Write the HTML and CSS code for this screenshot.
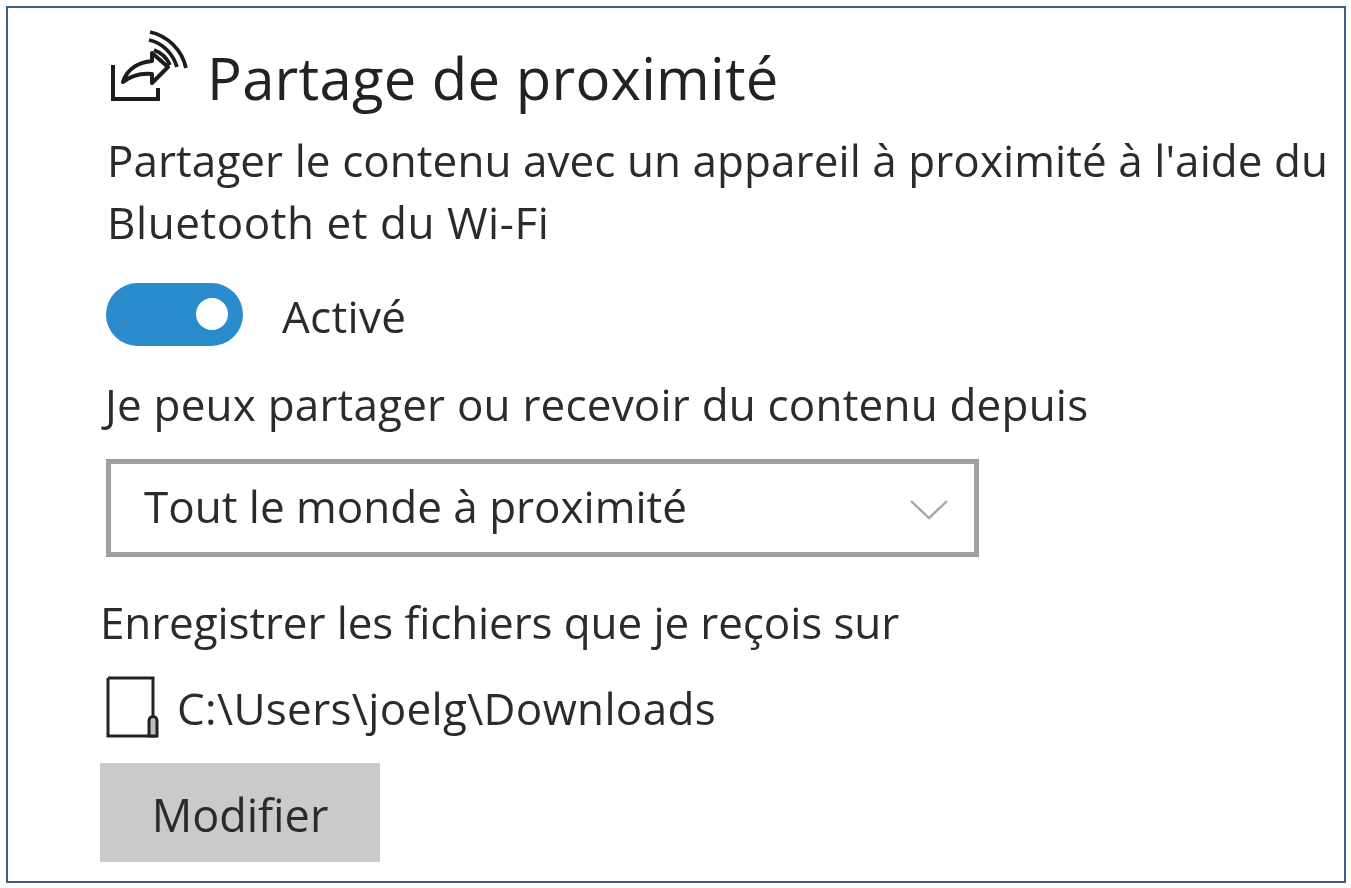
FILE: index.html
```html
<!DOCTYPE html>
<html lang="fr">
<head>
<meta charset="utf-8">
<title>Partage de proximité</title>
<link rel="stylesheet" href="styles.css">
</head>
<body>
<main class="frame">
  <header class="title-row">
    <svg class="share-icon" viewBox="0 0 80 80" width="80" height="80" fill="none" stroke="#1c1c1c" aria-hidden="true">
      <path d="M3 37V71H48V60" stroke-width="4"/>
      <path d="M13 54C17 40 30 34 42 33V25L58 39L42 55V46C32 45 22 47 13 54Z" stroke-width="4" stroke-linejoin="round"/>
      <path d="M40 4C58 8 72 22 76 40" stroke-width="3.8"/>
      <path d="M39 12C53 15 63 26 67 39" stroke-width="3.8"/>
      <path d="M44 22C52 25 57 30 60 37" stroke-width="3.8"/>
    </svg>
    <h1 class="title">Partage de proximité</h1>
  </header>
  <p class="desc">Partager le contenu avec un appareil à proximité à l'aide du<br><span class="desc-second">Bluetooth et du Wi-Fi</span></p>
  <div class="toggle-row">
    <span class="toggle"><span class="knob"></span></span>
    <span class="toggle-label">Activé</span>
  </div>
  <p class="label-from">Je peux partager ou recevoir du contenu depuis</p>
  <div class="select">
    <span class="select-text">Tout le monde à proximité</span>
    <svg class="chevron" viewBox="0 0 38 20" width="38" height="20" fill="none" stroke="#a6a6a6" stroke-width="2.4" aria-hidden="true">
      <path d="M1 1L19 18L37 1"/>
    </svg>
  </div>
  <p class="label-save">Enregistrer les fichiers que je reçois sur</p>
  <div class="path-row">
    <svg class="drive-icon" viewBox="0 0 54 64" width="54" height="64" fill="none" stroke="#222" stroke-width="3" aria-hidden="true">
      <path d="M2 2H47V40M2 2V60H50"/>
      <path d="M43 60V45C43 39 51 39 51 45V60Z" fill="#bbb"/>
    </svg>
    <span class="path-text">C:\Users\joelg\Downloads</span>
  </div>
  <button class="modify" type="button">Modifier</button>
</main>
</body>
</html>
```
FILE: styles.css
```css
* { box-sizing: border-box; }
html, body { margin: 0; padding: 0; background: #fff; }
body { width: 1351px; height: 888px; padding: 6px 5px 5px 6px; font-family: "Open Sans", "Noto Sans", sans-serif; color: #2b2b2b; overflow: hidden; }
.frame { width: 1340px; height: 877px; border: 2px solid #3f5a85; padding: 0 0 0 92px; display: flex; flex-direction: column; align-items: flex-start; }
.frame > * { filter: blur(0.7px); }
p, h1 { margin: 0; font-weight: 400; }
.title-row { display: flex; align-items: flex-start; margin: 20px 0 0 10px; height: 90px; }
.share-icon { display: block; }
.title { font-size: 58px; line-height: 70px; margin: 15px 0 0 17px; letter-spacing: 0.25px; color: #222; white-space: nowrap; }
.desc { font-size: 44px; line-height: 62px; margin: 11px 0 0 7px; letter-spacing: 0.07px; white-space: nowrap; }
.desc-second { letter-spacing: 0.55px; }
.toggle-row { display: flex; align-items: center; margin: 29px 0 0 6px; height: 64px; }
.toggle { display: flex; align-items: center; justify-content: flex-end; width: 137px; height: 63px; border-radius: 32px; background: #2a8bcd; padding-right: 15px; }
.knob { width: 32px; height: 32px; border-radius: 50%; background: #fff; }
.toggle-label { font-size: 44px; line-height: 60px; margin: 4px 0 0 39px; letter-spacing: 0.3px; }
.label-from { font-size: 44px; line-height: 60px; margin: 28px 0 0 5px; letter-spacing: 0.2px; white-space: nowrap; }
.select { display: flex; align-items: center; justify-content: space-between; width: 873px; height: 98px; margin: 25px 0 0 6px; border: 5px solid #a0a0a0; padding: 0 26px 0 33px; }
.select-text { font-size: 44px; line-height: 60px; margin-top: -4px; }
.chevron { display: block; margin-top: 3px; }
.label-save { font-size: 44px; line-height: 60px; margin: 35px 0 0 0; letter-spacing: -0.1px; white-space: nowrap; }
.path-row { display: flex; align-items: center; margin: 23px 0 0 6px; height: 66px; }
.drive-icon { display: block; }
.path-text { font-size: 44px; margin-left: 17px; letter-spacing: 0.33px; }
.modify { width: 280px; height: 99px; margin: 22px 0 0 0; border: 0; background: #cacaca; color: #2b2b2b; font-family: inherit; font-size: 45px; padding: 4px 0 0; }
```
